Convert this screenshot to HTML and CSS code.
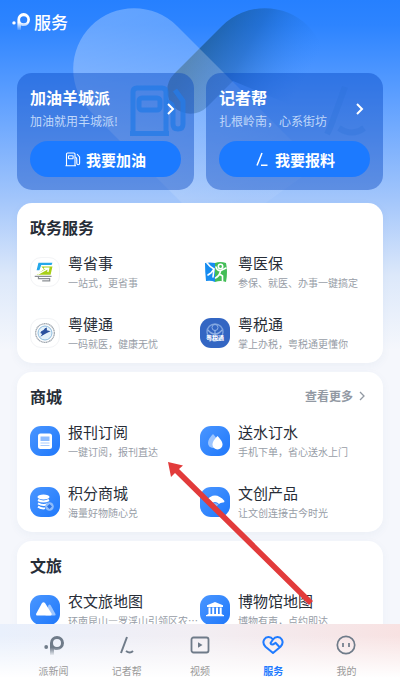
FILE: index.html
```html
<!DOCTYPE html>
<html lang="zh-CN">
<head>
    <meta charset="UTF-8">
    <meta name="viewport" content="width=device-width, initial-scale=1.0">
    <title>服务</title>
    <link rel="stylesheet" href="styles.css">
</head>
<body>
    <div class="app">
        <!-- heart shape behind the header -->
        <svg class="backdrop" width="400" height="330" viewBox="0 0 400 330" aria-hidden="true">
            <defs>
                <linearGradient id="lobeLight" gradientUnits="userSpaceOnUse" x1="100" y1="30" x2="240" y2="200">
                    <stop offset="0" stop-color="#fff" stop-opacity=".27"/>
                    <stop offset=".5" stop-color="#fff" stop-opacity=".2"/>
                    <stop offset="1" stop-color="#fff" stop-opacity=".06"/>
                </linearGradient>
                <linearGradient id="lobeDark" gradientUnits="userSpaceOnUse" x1="195" y1="50" x2="290" y2="105">
                    <stop offset="0" stop-color="#144b6e" stop-opacity=".6"/>
                    <stop offset=".4" stop-color="#14559a" stop-opacity=".42"/>
                    <stop offset="1" stop-color="#2f86ff" stop-opacity="0"/>
                </linearGradient>
            </defs>
            <path fill="url(#lobeDark)" d="M222 26a60.500 60.500 0 0 1 86 86L233 81l-26 26a23 23 0 0 1-33-33z"/>
            <path fill="url(#lobeLight)" d="M91 112a60.500 60.500 0 0 1 86-86l140 140-100 72z"/>
        </svg>

        <header class="header">
            <svg class="logo" width="18" height="20" viewBox="0 0 20 22" aria-hidden="true">
                <defs>
                    <linearGradient id="stemWhite" x1="0" y1="0" x2="0" y2="1">
                        <stop offset=".55" stop-color="#fff"/>
                        <stop offset="1" stop-color="#fff" stop-opacity=".1"/>
                    </linearGradient>
                </defs>
                <circle cx="2.200" cy="12" r="1.900" fill="#fff"/>
                <path fill="url(#stemWhite)" fill-rule="evenodd" d="M6 20V8.500A7 7.200 0 1 1 13 15.500q-2 0-3-.6V20zM13 4.500a4 4 0 1 0 0 8 4 4 0 0 0 0-8z"/>
            </svg>
            <h1>服务</h1>
        </header>

        <main class="content">
            <div class="promos">
                <section class="promo">
                    <svg class="promo-art" width="58" height="54" viewBox="0 0 58 54" fill="none" stroke="#257be6" stroke-opacity=".8" stroke-width="5" stroke-linejoin="round" aria-hidden="true">
                        <path d="M4 48V7q0-4 4-4h25q4 0 4 4v41M1 48.500h39"/>
                        <rect x="10" y="13" width="21" height="12" rx="3"/>
                        <path d="M38 17q6 1 6 8v14q0 5 5 5t5-5V16L46 5"/>
                    </svg>
                    <a href="#" class="promo-head">
                        <span>
                            <strong>加油羊城派</strong>
                            <small>加油就用羊城派!</small>
                        </span>
                        <svg width="8" height="12" viewBox="0 0 8 12" fill="none" stroke="#fff" stroke-width="2" aria-hidden="true"><path d="M1 1l5 5-5 5"/></svg>
                    </a>
                    <button class="promo-btn">
                        <svg width="16" height="15" viewBox="0 0 16 15" fill="none" stroke="#fff" stroke-width="1.100" aria-hidden="true">
                            <path d="M1.500 13.500V2q0-1 1-1H9q1 0 1 1v11.500M.5 13.800H11"/>
                            <rect x="3.500" y="3.800" width="4.600" height="3" rx=".5"/>
                            <path d="M10.200 5q1.600.3 1.600 2.500v3.800q0 1.400 1.400 1.400t1.400-1.400V5L12 2"/>
                        </svg>
                        我要加油
                    </button>
                </section>
                <section class="promo">
                    <svg class="promo-art" width="58" height="54" viewBox="0 0 58 54" fill="none" stroke="#2b72d8" stroke-opacity=".3" stroke-width="6" aria-hidden="true">
                        <path d="M27 2L12 43l-3 6"/>
                        <path d="M21 43q13 9 25 0"/>
                    </svg>
                    <a href="#" class="promo-head">
                        <span>
                            <strong>记者帮</strong>
                            <small>扎根岭南，心系街坊</small>
                        </span>
                        <svg width="8" height="12" viewBox="0 0 8 12" fill="none" stroke="#fff" stroke-width="2" aria-hidden="true"><path d="M1 1l5 5-5 5"/></svg>
                    </a>
                    <button class="promo-btn">
                        <svg width="16" height="15" viewBox="0 0 16 15" fill="none" stroke="#fff" stroke-width="1.500" aria-hidden="true"><path d="M8 1L3 13.500M7 13.300h6.500"/></svg>
                        我要报料
                    </button>
                </section>
            </div>

            <section class="card">
                <div class="card-head"><h2>政务服务</h2></div>
                <div class="items">
                    <a href="#" class="item">
                        <svg class="icon outlined" viewBox="0 0 30 30" aria-hidden="true">
                            <path fill="#24a8ea" d="M8 5h15l-1 2.500H11L9 13H6z"/>
                            <path fill="#a8cf18" d="M11 9h12l-2 9H6l8-6z"/>
                            <path stroke="#fff" stroke-width="1.500" fill="none" d="M7 17.500l11-6M14 11h5l-1 4"/>
                            <path stroke="#8b8f94" stroke-width="1.300" fill="none" d="M4 19.700h18M8 20v2h12v2.500h-8"/>
                        </svg>
                        <span class="item-text"><b>粤省事</b><small>一站式，更省事</small></span>
                    </a>
                    <a href="#" class="item">
                        <svg class="icon" viewBox="0 0 30 30" aria-hidden="true">
                            <path fill="#168cf0" d="M5 6q5-1 10 0v19q-4-2-9-1-1-9-1-18z"/>
                            <path fill="#43bd57" d="M15 6q5-2 11 0 2 9 0 19-5-2-11 0z"/>
                            <g fill="none" stroke="#fff" stroke-width="1.600" stroke-linecap="round">
                                <path d="M7 6q3 4 7 6l-3 4-3 2M14 12l-1 8"/>
                                <circle cx="20.500" cy="9.500" r="2.200"/>
                                <path d="M16 10q1 4 5 3.500l5-2.500M20.500 14q-1 5-5 7M19.500 17l3 2v5"/>
                            </g>
                        </svg>
                        <span class="item-text"><b>粤医保</b><small>参保、就医、办事一键搞定</small></span>
                    </a>
                    <a href="#" class="item">
                        <svg class="icon outlined" viewBox="0 0 30 30" aria-hidden="true">
                            <circle cx="15" cy="15" r="10" fill="none" stroke="#a3aab2" stroke-width="1.400" stroke-dasharray="1.500 .4"/>
                            <circle cx="15" cy="15" r="7.500" fill="#e6f2fa" stroke="#86b6da" stroke-width="1"/>
                            <path fill="#2b519e" d="M11 13q3-1 4-3l2-1 0 3 4 1-4 2-2 1-5 3 2-3-2-1z"/>
                        </svg>
                        <span class="item-text"><b>粤健通</b><small>一码就医，健康无忧</small></span>
                    </a>
                    <a href="#" class="item">
                        <svg class="icon navy" viewBox="0 0 30 30" aria-hidden="true">
                            <circle cx="15" cy="14" r="8" fill="none" stroke="#7da2de" stroke-width="1.400"/>
                            <circle cx="15" cy="9.500" r="3" fill="none" stroke="#8fb0e4"/>
                            <path d="M8 12q3 4 7 4t7-4M10 21q5 4 10 0M15 12v6" fill="none" stroke="#8fb0e4" stroke-width="1.300"/>
                            <text x="15" y="22" text-anchor="middle" class="badge-text">粤税通</text>
                        </svg>
                        <span class="item-text"><b>粤税通</b><small>掌上办税，粤税通更懂你</small></span>
                    </a>
                </div>
            </section>

            <section class="card">
                <div class="card-head">
                    <h2>商城</h2>
                    <a href="#" class="more">查看更多
                        <svg width="7" height="10" viewBox="0 0 7 10" fill="none" stroke="#9299a3" stroke-width="1.300" aria-hidden="true"><path d="M1 1l4 4-4 4"/></svg>
                    </a>
                </div>
                <div class="items">
                    <a href="#" class="item">
                        <svg class="icon blue" viewBox="0 0 30 30" aria-hidden="true">
                            <rect x="8" y="7.500" width="14" height="15.500" rx="2.500" fill="#fff"/>
                            <path fill="#8dbcff" d="M10.500 10.500h9v4.500h-9z"/>
                            <path stroke="#a9ccff" stroke-width="1" d="M10.500 17h9M10.500 19.500h9"/>
                        </svg>
                        <span class="item-text"><b>报刊订阅</b><small>一键订阅，报刊直达</small></span>
                    </a>
                    <a href="#" class="item">
                        <svg class="icon blue" viewBox="0 0 30 30" aria-hidden="true">
                            <path fill="#9cc5ff" d="M13 8q5 5 5 9a5 5 0 0 1-10 0q0-4 5-9z"/>
                            <path fill="#fff" d="M17.500 10q5 5 5 8.500a5 5 0 0 1-10 0q0-3.500 5-8.500z"/>
                        </svg>
                        <span class="item-text"><b>送水订水</b><small>手机下单，省心送水上门</small></span>
                    </a>
                    <a href="#" class="item">
                        <svg class="icon blue" viewBox="0 0 30 30" aria-hidden="true">
                            <ellipse cx="13.500" cy="10" rx="6" ry="2.500" fill="#fff"/>
                            <path fill="none" stroke="#fff" stroke-width="2" d="M8 13q5.500 3 11 0M8 16.300q5.500 3 10 .5M8 19.600q4 2.500 7 1.500"/>
                            <circle cx="19.500" cy="19.500" r="4.300" fill="#8fbcfb"/>
                            <path fill="#2c74e8" d="M19.500 17l2.500 2.500-2.500 2.500-2.500-2.500z"/>
                        </svg>
                        <span class="item-text"><b>积分商城</b><small>海量好物随心兑</small></span>
                    </a>
                    <a href="#" class="item">
                        <svg class="icon blue" viewBox="0 0 30 30" aria-hidden="true">
                            <path fill="#fff" d="M5.500 14q9.500-11 19 0 0 1.500-1.500 1.500-3 0-4 1.500-4-4-8 0-1-1.500-4-1.500-1.500 0-1.500-1.500z"/>
                            <path fill="#8fbcfb" d="M11.500 17.500q3.500-3 7 0l-3 3z"/>
                        </svg>
                        <span class="item-text"><b>文创产品</b><small>让文创连接古今时光</small></span>
                    </a>
                </div>
            </section>

            <section class="card">
                <div class="card-head"><h2>文旅</h2></div>
                <div class="items">
                    <a href="#" class="item">
                        <svg class="icon blue" viewBox="0 0 30 30" aria-hidden="true">
                            <path fill="#9cc5ff" d="M18.500 10q1-1 2 0l5 9q.5 1.500-1 1.500h-9z"/>
                            <path fill="#fff" d="M12 8q1.500-1.700 3 0l6.500 10.500q.8 2-1 2h-13q-2 0-1.200-2z"/>
                        </svg>
                        <span class="item-text"><b>农文旅地图</b><small>环南昆山—罗浮山引领区农文旅地图</small></span>
                    </a>
                    <a href="#" class="item">
                        <svg class="icon blue" viewBox="0 0 30 30" fill="#fff" aria-hidden="true">
                            <path d="M15 7l8 3.300v1.700H7v-1.700zM8.500 12.500h2V19h-2zM12.200 12.500h2V19h-2zM16 12.500h2V19h-2zM19.700 12.500h2V19h-2zM7.500 19h15v1H24v1.300H6V20h1.500z"/>
                        </svg>
                        <span class="item-text"><b>博物馆地图</b><small>博物有声，点约即达</small></span>
                    </a>
                </div>
            </section>
        </main>

        <nav class="tabs">
            <a href="#">
                <svg width="20" height="22" viewBox="0 0 20 22" aria-hidden="true">
                    <defs>
                        <linearGradient id="stemGrey" x1="0" y1="0" x2="0" y2="1">
                            <stop offset=".6" stop-color="#6f7b89"/>
                            <stop offset="1" stop-color="#6f7b89" stop-opacity=".1"/>
                        </linearGradient>
                    </defs>
                    <circle cx="2.200" cy="13" r="1.900" fill="#6f7b89"/>
                    <path fill="url(#stemGrey)" fill-rule="evenodd" d="M6 21V9A7 7 0 1 1 13 16q-2 0-3-.6V21zM13 5a4 4 0 1 0 0 8 4 4 0 0 0 0-8z"/>
                </svg>
                派新闻
            </a>
            <a href="#">
                <svg width="20" height="22" viewBox="0 0 20 22" fill="none" stroke="#6f7b89" stroke-width="2" aria-hidden="true"><path d="M10 3L4 19M9 17q4 3 7 0"/></svg>
                记者帮
            </a>
            <a href="#">
                <svg width="20" height="22" viewBox="0 0 20 22" fill="none" stroke="#6f7b89" stroke-width="1.800" aria-hidden="true">
                    <rect x="1.500" y="3.500" width="17" height="15" rx="2"/>
                    <path d="M8 8.200v5.600l4.500-2.800z" fill="#6f7b89" stroke="none"/>
                </svg>
                视频
            </a>
            <a href="#" class="active">
                <svg width="22" height="22" viewBox="0 0 22 22" fill="none" stroke="#1f7bff" stroke-width="2" stroke-linecap="round" stroke-linejoin="round" aria-hidden="true">
                    <path d="M11 5.500C8.500 2 4 2.500 2.200 5.500c-1.700 3-.4 5.500 1.300 7.200L11 19l7.500-6.300c1.700-1.700 3-4.200 1.300-7.200C18 2.500 13.500 2 11 5.500L8.500 9c.5 2 2.500 2 4 .5l1-.7 3.500 3.700"/>
                </svg>
                服务
            </a>
            <a href="#">
                <svg width="20" height="22" viewBox="0 0 20 22" fill="none" stroke="#6f7b89" stroke-width="1.700" aria-hidden="true">
                    <circle cx="10" cy="11" r="8.700"/>
                    <path d="M7 9v4M13 9v4"/>
                </svg>
                我的
            </a>
        </nav>

        <!-- arrow pointing at 报刊订阅 -->
        <svg class="arrow" width="146" height="144" viewBox="0 0 146 144" aria-hidden="true">
            <path fill="#e23b3b" d="M0 0l15 3.500-4 3.500L145 139l-4 4L7 11l-4 4z"/>
        </svg>
    </div>
</body>
</html>
```
FILE: styles.css
```css
* {
    box-sizing: border-box;
}
body {
    margin: 0;
    font-family: "Noto Sans CJK SC", sans-serif;
    color: #272d37;
}
h1, h2 {
    margin: 0;
}
a {
    color: inherit;
    text-decoration: none;
}
svg {
    flex-shrink: 0;
}
.app {
    position: relative;
    display: flex;
    flex-direction: column;
    height: 100vh;
    overflow: hidden;
    background: #f5f7fc linear-gradient(#2680ff 0, #2d84ff 25px, #5fa0ff 100px, #a3c6fb 200px, #dce8fa 275px, #f5f7fc 350px) no-repeat;
}
.backdrop {
    position: absolute;
    top: 0;
    left: 0;
}
.header {
    position: relative;
    display: flex;
    align-items: center;
    gap: 4px;
    height: 73px;
    padding: 0 12px 30px;
    flex-shrink: 0;
}
.header h1 {
    font-size: 17px;
    line-height: 24px;
    font-weight: 500;
    color: #fff;
}
.content {
    position: relative;
    flex: 1;
    min-height: 0;
    padding: 0 17px;
    overflow-y: auto;
    scrollbar-width: none;
}

/* top two cards */
.promos {
    display: grid;
    grid-template-columns: 1fr 1fr;
    gap: 12px;
    margin-bottom: 13px;
}
.promo {
    position: relative;
    padding: 12px 13px 13px;
    border-radius: 15px;
    background: rgba(0, 65, 190, 0.4);
    color: #fff;
}
.promo-art {
    position: absolute;
    top: 12px;
    right: 7px;
}
.promo-head {
    position: relative;
    display: flex;
    align-items: center;
    justify-content: space-between;
    padding-right: 6px;
    margin-bottom: 8px;
}
.promo-head strong,
.promo-head small {
    display: block;
    line-height: 24px;
}
.promo-head strong {
    font-size: 16px;
}
.promo-head small {
    font-size: 12px;
    color: #c0d8fa;
}
.promo-btn {
    position: relative;
    display: flex;
    align-items: center;
    justify-content: center;
    gap: 5px;
    width: 100%;
    height: 36px;
    border: 0;
    border-radius: 18px;
    background: #1c7aff;
    color: #fff;
    font-family: inherit;
    font-size: 15px;
    font-weight: 700;
}

/* service lists */
.card {
    padding: 12px 13px 10px;
    margin-bottom: 9px;
    border-radius: 15px;
    background: #fff;
    box-shadow: 0 3px 10px rgba(60, 90, 140, 0.05);
}
.card-head {
    display: flex;
    align-items: center;
    justify-content: space-between;
    margin-bottom: 13px;
}
.card-head h2 {
    font-size: 16px;
    line-height: 24px;
}
.more {
    display: flex;
    align-items: center;
    gap: 6px;
    padding-right: 4px;
    font-size: 12px;
    line-height: 20px;
    font-weight: 700;
    color: #9299a3;
}
.items {
    display: grid;
    grid-template-columns: 1fr 1fr;
    row-gap: 21px;
}
.item {
    display: flex;
    align-items: center;
    gap: 8px;
    min-width: 0;
}
.icon {
    width: 30px;
    height: 30px;
    border-radius: 11px;
}
.icon.outlined {
    border: 1px solid #f3f4f6;
}
.icon.blue {
    background: linear-gradient(135deg, #4a96ff, #1f78fb);
}
.icon.navy {
    background: #3366c3;
}
.badge-text {
    font-size: 6px;
    font-weight: 700;
    fill: #fff;
}
.item-text {
    min-width: 0;
}
.item-text b,
.item-text small {
    display: block;
    white-space: nowrap;
}
.item-text b {
    font-size: 15px;
    line-height: 22px;
    font-weight: 400;
}
.item-text small {
    font-size: 10px;
    line-height: 18px;
    color: #979da7;
    overflow: hidden;
    text-overflow: ellipsis;
}

/* bottom bar */
.tabs {
    position: relative;
    display: flex;
    flex-shrink: 0;
    height: 57px;
    padding: 10px 17px 0;
    background: linear-gradient(rgba(255, 255, 255, 0) 20%, #fff 95%), linear-gradient(90deg, #e9f0fc, #f2eef3 50%, #f8e2e2);
}
.tabs a {
    flex: 1;
    display: flex;
    flex-direction: column;
    align-items: center;
    gap: 7px;
    font-size: 10px;
    line-height: 16px;
    color: #999;
}
.tabs .active {
    color: #1f7bff;
    font-weight: 700;
}
.arrow {
    position: absolute;
    top: 462px;
    left: 168px;
}
```
